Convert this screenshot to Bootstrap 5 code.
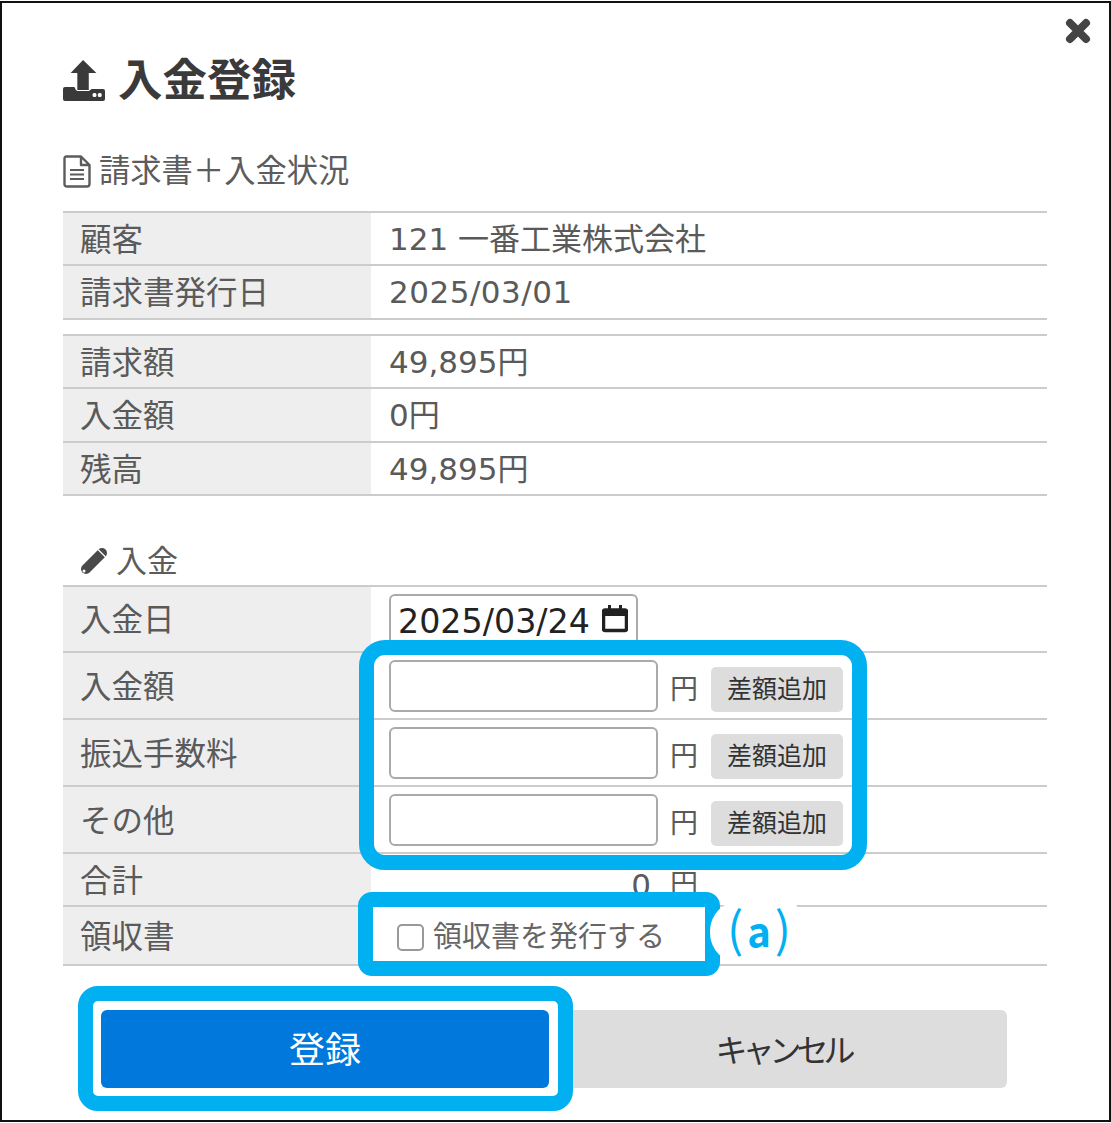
<!DOCTYPE html>
<html lang="ja">
<head>
    <meta charset="UTF-8">
    <title>入金登録</title>
    <link rel="stylesheet" href="https://cdn.jsdelivr.net/npm/bootstrap@5.3.3/dist/css/bootstrap.min.css">
    <style>
        body {
            background: #fff;
            font-family: "DejaVu Sans", "Noto Sans CJK JP", sans-serif;
            color: #555;
            padding-top: 1px;
        }

        .pay-frame {
            position: relative;
            width: 1111px;
            height: 1121px;
            border: 2px solid #111;
            padding: 52px 62px 0 61px;
            overflow: hidden;
        }

        .pay-close {
            position: absolute;
            top: 15px;
            right: 18px;
        }

        .pay-title {
            height: 52px;
            font-size: 44.500px;
            line-height: 52px;
            font-weight: 700;
            color: #3a3a3a;
            margin: 0 0 44px;
            gap: 13px;
        }

        .pay-sub {
            height: 40px;
            font-size: 31.300px;
            line-height: 40px;
            font-weight: 400;
            color: #5c5c5c;
            margin: 0 0 20px;
        }

        .pay-sub-pen {
            margin: 49px 0 8px 17px;
            height: 32px;
            line-height: 32px;
            font-size: 31px;
            gap: 8px;
        }

        .pay-tbl.table {
            width: 984px;
            margin: 0 0 14px;
            border-collapse: collapse;
            table-layout: fixed;
        }

        .pay-tbl.table > tbody > tr > * {
            padding: 0 0 0 18px;
            border: 0;
            border-top: 2px solid #ccc;
            border-bottom: 2px solid #ccc;
            font-size: 31px;
            font-weight: 400;
            line-height: 40px;
            color: #5a5a5a;
            vertical-align: middle;
            box-shadow: none;
            background: #fff;
        }

        .pay-tbl.table > tbody > tr > th {
            width: 308px;
            background: #eee;
            font-size: 31.500px;
            padding-top: 2px;
            padding-left: 17px;
        }

        .pay-tbl .h-53 { height: 53px; }
        .pay-tbl .h-54 { height: 54px; }
        .pay-tbl .h-66 { height: 66px; }
        .pay-tbl .h-67 { height: 67px; }
        .pay-tbl .h-59 { height: 59px; }

        .pay-spaced { letter-spacing: .5px; }

        .pay-date {
            width: 249px;
            height: 57px;
            margin-top: 7px;
            padding: 0 8px 0 7px;
            border: 2px solid #aaa;
            border-radius: 6px 6px 0 0;
            border-bottom: 0;
            font-size: 33.300px;
            line-height: 52px;
            color: #222;
        }

        .pay-input.form-control {
            width: 269px;
            height: 52px;
            padding: 0 8px;
            border: 2px solid #aaa;
            border-radius: 6px;
            box-shadow: none;
        }

        .pay-yen {
            width: 28px;
            margin: 10px 13px 0 12px;
            font-size: 28px;
        }

        .pay-diff.btn {
            width: 132px;
            height: 45px;
            margin-top: 7px;
            padding: 0;
            border: 0;
            border-radius: 5px;
            background: #ddd;
            color: #333;
            font-size: 25px;
            line-height: 45px;
        }

        .pay-total {
            width: 269px;
            margin-top: 10px;
            padding-right: 7px;
            text-align: right;
        }

        .pay-check.form-check-input {
            width: 27px;
            height: 27px;
            margin: 0 9px 0 8px;
            border: 2px solid #999;
            border-radius: 5px;
            flex: none;
        }

        .pay-check-row { padding-top: 3px; }

        .pay-check-label {
            font-size: 29px;
            color: #666;
        }

        .pay-actions {
            gap: 10px;
            margin: 44px 0 0 38px;
        }

        .pay-actions .btn {
            width: 448px;
            height: 78px;
            padding: 4px 0 0;
            border: 0;
            border-radius: 6px;
        }

        .pay-ok.btn {
            background: #0078dc;
            color: #fff;
            font-size: 36px;
        }

        .pay-cancel.btn {
            background: #ddd;
            color: #333;
            font-size: 32px;
            letter-spacing: -5px;
        }

        /* call-outs drawn over the form */
        .mark-box {
            position: absolute;
            border: 15px solid #00b0f0;
            pointer-events: none;
        }

        .mark-amounts { left: 357px; top: 637px; width: 508px; height: 230px; border-radius: 26px; }
        .mark-receipt { left: 356px; top: 889px; width: 362px; height: 84px; border-radius: 14px; }
        .mark-submit { left: 76px; top: 983px; width: 495px; height: 125px; border-radius: 20px; }

        .mark-label {
            position: absolute;
            left: 708px;
            top: 898px;
            width: 90px;
            height: 62px;
            padding-left: 8px;
            background: #fff;
            border-radius: 30px 14px 14px 30px;
            color: #00b0f0;
            font-family: "Noto Sans CJK JP", sans-serif;
            font-size: 48px;
            line-height: 50px;
        }

        .mark-label b {
            font-size: 40px;
            font-weight: 700;
            margin: 0 4px;
        }
    </style>
</head>
<body>

<div class="pay-frame">
    <svg class="pay-close" width="26" height="26" viewBox="0 0 26 26">
        <path d="M5 5 L21 21 M21 5 L5 21" stroke="#444" stroke-width="8" stroke-linecap="round"/>
    </svg>

    <h1 class="pay-title d-flex align-items-center">
        <svg width="42" height="42" viewBox="0 0 44 42" preserveAspectRatio="none">
            <path fill="#3a3a3a" d="M21 0 L35 13 H27 V30 H15 V13 H8 Z"/>
            <path fill="#3a3a3a" d="M2 27 H12 Q13 30 15 31 H27 Q29 30 30 29 H42 Q44 29 44 31 V39 Q44 41 42 41 H2 Q0 41 0 39 V29 Q0 27 2 27 Z"/>
            <rect x="31" y="33" width="4" height="4" rx="1.500" fill="#fff"/>
            <rect x="36.500" y="33" width="4" height="4" rx="1.500" fill="#fff"/>
        </svg>
        <span>入金登録</span>
    </h1>

    <h2 class="pay-sub d-flex align-items-center gap-2">
        <svg width="28" height="33" viewBox="0 0 28 33">
            <path fill="none" stroke="#5c5c5c" stroke-width="2.400" stroke-linejoin="round" d="M3 1.500 H18 L26.500 10 V29 Q26.500 31.500 24 31.500 H3.500 Q1.500 31.500 1.500 29 V4 Q1.500 1.500 3.500 1.500 Z M18 1.500 V10 H26.500"/>
            <path stroke="#5c5c5c" stroke-width="2" d="M7 15 H21 M7 19.500 H21 M7 24 H21"/>
        </svg>
        <span>請求書＋入金状況</span>
    </h2>

    <table class="table pay-tbl">
        <tbody>
            <tr class="h-53"><th>顧客</th><td>121 一番工業株式会社</td></tr>
            <tr class="h-54"><th>請求書発行日</th><td class="pay-spaced">2025/03/01</td></tr>
        </tbody>
    </table>

    <table class="table pay-tbl">
        <tbody>
            <tr class="h-53"><th>請求額</th><td>49,895円</td></tr>
            <tr class="h-54"><th>入金額</th><td>0円</td></tr>
            <tr class="h-53"><th>残高</th><td>49,895円</td></tr>
        </tbody>
    </table>

    <h2 class="pay-sub pay-sub-pen d-flex align-items-center">
        <svg width="28" height="28" viewBox="0 0 28 28">
            <path stroke="#4a4a4a" stroke-width="10" stroke-linecap="round" d="M6 22 L22 6"/>
            <path stroke="#fff" stroke-width="1.300" d="M18 2.500 L25.500 10"/>
            <circle cx="4" cy="24" r="1.500" fill="#fff"/>
        </svg>
        <span>入金</span>
    </h2>

    <table class="table pay-tbl mb-0">
        <tbody>
            <tr class="h-66">
                <th>入金日</th>
                <td>
                    <div class="pay-date d-flex align-items-start justify-content-between">
                        <span>2025/03/24</span>
                        <svg class="mt-2" width="26" height="29" viewBox="0 0 26 29">
                            <path fill="none" stroke="#222" stroke-width="3.500" d="M3 6 H23 Q24.500 6 24.500 7.500 V25 Q24.500 26.500 23 26.500 H3 Q1.500 26.500 1.500 25 V7.500 Q1.500 6 3 6 Z"/>
                            <path fill="#222" d="M2 6 H24 V12 H2 Z M6 1 H9 V6 H6 Z M17 1 H20 V6 H17 Z"/>
                        </svg>
                    </div>
                </td>
            </tr>
            <tr class="h-67">
                <th>入金額</th>
                <td>
                    <div class="d-flex align-items-start">
                        <input type="text" class="form-control pay-input">
                        <span class="pay-yen">円</span>
                        <button type="button" class="btn pay-diff">差額追加</button>
                    </div>
                </td>
            </tr>
            <tr class="h-67">
                <th>振込手数料</th>
                <td>
                    <div class="d-flex align-items-start">
                        <input type="text" class="form-control pay-input">
                        <span class="pay-yen">円</span>
                        <button type="button" class="btn pay-diff">差額追加</button>
                    </div>
                </td>
            </tr>
            <tr class="h-67">
                <th>その他</th>
                <td>
                    <div class="d-flex align-items-start">
                        <input type="text" class="form-control pay-input">
                        <span class="pay-yen">円</span>
                        <button type="button" class="btn pay-diff">差額追加</button>
                    </div>
                </td>
            </tr>
            <tr class="h-53">
                <th>合計</th>
                <td>
                    <div class="d-flex">
                        <span class="pay-total">0</span>
                        <span class="pay-yen">円</span>
                    </div>
                </td>
            </tr>
            <tr class="h-59">
                <th>領収書</th>
                <td>
                    <div class="d-flex align-items-center pay-check-row">
                        <input type="checkbox" class="form-check-input pay-check mt-0" id="receipt">
                        <label class="pay-check-label" for="receipt">領収書を発行する</label>
                    </div>
                </td>
            </tr>
        </tbody>
    </table>

    <div class="pay-actions d-flex">
        <button type="button" class="btn pay-ok">登録</button>
        <button type="button" class="btn pay-cancel">キャンセル</button>
    </div>

    <div class="mark-box mark-amounts"></div>
    <div class="mark-box mark-receipt"></div>
    <div class="mark-box mark-submit"></div>
    <div class="mark-label d-flex justify-content-center align-items-baseline">(<b>a</b>)</div>
</div>

<script src="https://cdn.jsdelivr.net/npm/bootstrap@5.3.3/dist/js/bootstrap.bundle.min.js"></script>
</body>
</html>
